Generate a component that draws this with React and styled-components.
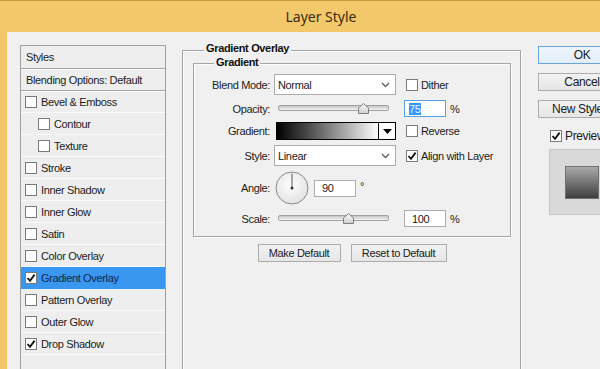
import React from 'react';
import styled, { createGlobalStyle } from 'styled-components';

const GlobalStyle = createGlobalStyle`
  html, body {
    margin: 0;
    padding: 0;
    background: #f2c86b;
  }
  body {
    font-family: "Liberation Sans", Arial, sans-serif;
    font-size: 11px;
    letter-spacing: -0.35px;
    color: #1b1b1b;
  }
`;

const Frame = styled.div`
  width: 600px;
  height: 369px;
  overflow: hidden;
`;

const Window = styled.div`
  width: 642px;
  height: 369px;
  box-sizing: border-box;
  display: flex;
  flex-direction: column;
  background: #f2c86b;
  border-top: 1px solid #c99a3f;
`;

const TitleBar = styled.div`
  height: 31px;
  flex: none;
  display: flex;
  align-items: center;
  justify-content: center;
  font-family: "Noto Sans", "Open Sans", sans-serif;
  font-size: 14px;
  letter-spacing: 0;
  color: #3b2c12;
`;

const Body = styled.div`
  flex: 1;
  margin: 0 7px;
  background: #f0f0f0;
  display: flex;
  align-items: flex-start;
  padding: 13px 0 0 13px;
  overflow: hidden;
`;

/* ---------- left list ---------- */

const StylesPanel = styled.div`
  flex: none;
  width: 146px;
  height: 340px;
  box-sizing: border-box;
  border: 1px solid #a0a0a0;
  background: #eeeeee;
`;

const HeaderRow = styled.div`
  height: ${p => p.h}px;
  display: flex;
  align-items: center;
  padding-left: 5px;
  border-bottom: 1px solid #a3a3a3;
  box-shadow: 0 1px 0 #fbfbfb;
`;

const StyleRow = styled.div`
  height: 21px;
  display: flex;
  align-items: center;
  gap: 4px;
  padding-left: ${p => (p.sub ? 17 : 4)}px;
  border-bottom: 1px solid ${p => (p.selected ? '#3a97ef' : '#fafafa')};
  background: ${p => (p.selected ? '#3a97ef' : 'transparent')};
  color: ${p => (p.selected ? '#0c2750' : 'inherit')};
`;

const Box = styled.span`
  flex: none;
  width: 12px;
  height: 12px;
  box-sizing: border-box;
  border: 1px solid #7a7a7a;
  background: #fff;
  display: inline-flex;
  align-items: center;
  justify-content: center;
`;

const Checkbox = ({ checked }) => (
  <Box>
    {checked && (
      <svg width="10" height="10" viewBox="0 0 10 10">
        <path d="M1.5 5 L4 7.8 L8.6 1.6" fill="none" stroke="#111" strokeWidth="1.8" />
      </svg>
    )}
  </Box>
);

/* ---------- middle groups ---------- */

const Middle = styled.div`
  flex: none;
  width: 339px;
  margin: 5px 0 0 16px;
`;

const Group = styled.div`
  position: relative;
  box-sizing: border-box;
  border: 1px solid #a6a6a6;
  box-shadow: inset 1px 1px 0 #fcfcfc, 1px 1px 0 #fcfcfc;
`;

const OuterGroup = styled(Group)`
  height: 340px;
  padding: 12px 9px 0 10px;
`;

const InnerGroup = styled(Group)`
  height: 174px;
  padding-top: 10px;
`;

const Legend = styled.span`
  position: absolute;
  top: ${p => p.top}px;
  left: ${p => p.left}px;
  padding: 0 2px;
  line-height: 13px;
  background: #f0f0f0;
  font-weight: bold;
  color: #111;
`;

const Form = styled.div`
  display: grid;
  grid-template-columns: 80px 122px 1fr;
  grid-template-rows: 21px 17px 18px 21px 34px 17px;
  row-gap: 5px;
  align-items: center;
`;

const Label = styled.div`
  text-align: right;
  padding-right: 4px;
`;

const Extra = styled.div`
  display: flex;
  align-items: center;
  gap: ${p => (p.check ? 3 : 4)}px;
  padding-left: ${p => (p.check ? 10 : 8)}px;
`;

const Select = styled.div`
  height: 21px;
  box-sizing: border-box;
  border: 1px solid #acacac;
  background: #fff;
  display: flex;
  align-items: center;
  justify-content: space-between;
  padding: 0 5px 0 3px;
`;

const Chevron = () => (
  <svg width="9" height="6" viewBox="0 0 9 6">
    <path d="M1 1 L4.5 4.5 L8 1" fill="none" stroke="#606060" strokeWidth="1.4" />
  </svg>
);

const SliderWrap = styled.div`
  position: relative;
  height: 17px;
  margin: 0 7px 0 4px;
`;

const Track = styled.div`
  position: absolute;
  left: 0;
  right: 0;
  top: 5px;
  height: 4px;
  border: 1px solid #a2a2a2;
  border-radius: 2px;
  background: linear-gradient(#c6c6c6, #f4f4f4);
`;

const ThumbSvg = styled.svg`
  position: absolute;
  top: 3px;
  margin-left: -5px;
`;

const Slider = ({ value }) => (
  <SliderWrap>
    <Track />
    <ThumbSvg width="11" height="11" viewBox="0 0 11 11" style={{ left: `${value}%` }}>
      <defs>
        <linearGradient id="thumbFill" x1="0" y1="0" x2="0" y2="1">
          <stop offset="0" stopColor="#fafafa" />
          <stop offset="1" stopColor="#cfcfcf" />
        </linearGradient>
      </defs>
      <path d="M5.5 0.5 L10.5 5 L10.5 10.5 L0.5 10.5 L0.5 5 Z" fill="url(#thumbFill)" stroke="#7d7d7d" />
    </ThumbSvg>
  </SliderWrap>
);

const NumInput = styled.div`
  width: 42px;
  height: 17px;
  box-sizing: border-box;
  border: 1px solid ${p => (p.focused ? '#5b9fe0' : '#abadb3')};
  background: #fff;
  display: flex;
  align-items: center;
  padding-left: ${p => p.pad || 4}px;
`;

const Highlight = styled.span`
  background: #3399ff;
  color: #e8f2ff;
`;

const GradientBar = styled.div`
  display: flex;
  height: 18px;
  margin-left: 2px;
  box-sizing: border-box;
  border: 1px solid #000;
`;

const GradientFill = styled.div`
  flex: 1;
  background: linear-gradient(to right, #000 0%, #555 35%, #fff 100%);
  border-right: 1px solid #000;
`;

const ArrowBox = styled.div`
  width: 16px;
  background: #fff;
  display: flex;
  align-items: center;
  justify-content: center;
`;

const AngleCell = styled.div`
  display: flex;
  align-items: center;
  height: 34px;
`;

const DialSvg = styled.svg`
  flex: none;
  margin-left: 1px;
`;

const Dial = () => (
  <DialSvg width="34" height="34" viewBox="0 0 34 34">
    <defs>
      <radialGradient id="dialFill" cx="0.45" cy="0.4" r="0.6">
        <stop offset="0" stopColor="#ffffff" />
        <stop offset="1" stopColor="#e2e2e2" />
      </radialGradient>
    </defs>
    <circle cx="17" cy="17" r="16" fill="url(#dialFill)" stroke="#8a8a8a" />
    <line x1="17" y1="17" x2="17" y2="2.5" stroke="#555" strokeWidth="1" />
    <circle cx="17" cy="17" r="1.5" fill="#333" />
  </DialSvg>
);

const Degree = styled.span`
  margin-left: 4px;
  margin-top: -4px;
`;

const ButtonRow = styled.div`
  display: flex;
  justify-content: center;
  gap: 10px;
  margin-top: 7px;
`;

const Button = styled.button`
  width: ${p => p.w}px;
  height: 18px;
  padding: 0;
  font: inherit;
  font-size: ${p => p.size || 11}px;
  letter-spacing: -0.35px;
  color: #1b1b1b;
  box-sizing: border-box;
  white-space: nowrap;
  border: 1px solid ${p => (p.primary ? '#6aa4dc' : '#acacac')};
  background: ${p =>
    p.primary ? 'linear-gradient(#eef5fc, #e1edf9)' : 'linear-gradient(#f2f2f2, #e6e6e6)'};
`;

/* ---------- right column ---------- */

const Side = styled.div`
  flex: none;
  width: 88px;
  margin: 1px 0 0 17px;
  display: flex;
  flex-direction: column;
  gap: 9px;
`;

const PreviewRow = styled.label`
  display: flex;
  align-items: center;
  gap: 3px;
  margin: 2px 0 0 12px;
  font-size: 12px;
`;

const PreviewBox = styled.div`
  width: 66px;
  height: 66px;
  margin: -3px 0 0 11px;
  box-sizing: border-box;
  border: 1px solid #c6c6c6;
  background: #d9d9d9;
  display: flex;
  align-items: center;
  justify-content: center;
`;

const PreviewSwatch = styled.div`
  width: 34px;
  height: 33px;
  box-sizing: border-box;
  border: 1px solid #707070;
  background: linear-gradient(#a9a9a9, #3f3f3f);
`;

const styleItems = [
  { label: 'Bevel & Emboss' },
  { label: 'Contour', sub: true },
  { label: 'Texture', sub: true },
  { label: 'Stroke' },
  { label: 'Inner Shadow' },
  { label: 'Inner Glow' },
  { label: 'Satin' },
  { label: 'Color Overlay' },
  { label: 'Gradient Overlay', checked: true, selected: true },
  { label: 'Pattern Overlay' },
  { label: 'Outer Glow' },
  { label: 'Drop Shadow', checked: true },
];

export default function App() {
  const opacity = 75;
  const scale = 100;
  return (
    <Frame>
      <GlobalStyle />
      <Window>
        <TitleBar>Layer Style</TitleBar>
        <Body>
          <StylesPanel>
            <HeaderRow h={22}>Styles</HeaderRow>
            <HeaderRow h={21}>Blending Options: Default</HeaderRow>
            {styleItems.map(item => (
              <StyleRow key={item.label} sub={item.sub} selected={item.selected}>
                <Checkbox checked={item.checked} />
                {item.label}
              </StyleRow>
            ))}
          </StylesPanel>

          <Middle>
            <OuterGroup>
              <Legend top={-9} left={21}>Gradient Overlay</Legend>
              <InnerGroup>
                <Legend top={-8} left={20}>Gradient</Legend>
                <Form>
                  <Label>Blend Mode:</Label>
                  <Select>
                    Normal
                    <Chevron />
                  </Select>
                  <Extra check>
                    <Checkbox />
                    Dither
                  </Extra>

                  <Label>Opacity:</Label>
                  <Slider value={(opacity / 100) * 100 + 2} />
                  <Extra>
                    <NumInput focused>
                      <Highlight>{opacity}</Highlight>
                    </NumInput>
                    %
                  </Extra>

                  <Label>Gradient:</Label>
                  <GradientBar>
                    <GradientFill />
                    <ArrowBox>
                      <svg width="9" height="5" viewBox="0 0 9 5">
                        <path d="M0 0 L9 0 L4.5 5 Z" fill="#000" />
                      </svg>
                    </ArrowBox>
                  </GradientBar>
                  <Extra check>
                    <Checkbox />
                    Reverse
                  </Extra>

                  <Label>Style:</Label>
                  <Select>
                    Linear
                    <Chevron />
                  </Select>
                  <Extra check>
                    <Checkbox checked />
                    Align with Layer
                  </Extra>

                  <Label>Angle:</Label>
                  <AngleCell>
                    <Dial />
                    <NumInput style={{ marginLeft: 5 }} pad={7}>90</NumInput>
                    <Degree>°</Degree>
                  </AngleCell>
                  <div />

                  <Label>Scale:</Label>
                  <Slider value={((scale - 10) / 140) * 100 - 1} />
                  <Extra>
                    <NumInput pad={7}>{scale}</NumInput>
                    %
                  </Extra>
                </Form>
              </InnerGroup>
              <ButtonRow>
                <Button w={83}>Make Default</Button>
                <Button w={96}>Reset to Default</Button>
              </ButtonRow>
            </OuterGroup>
          </Middle>

          <Side>
            <Button w={88} size={12} primary>OK</Button>
            <Button w={88} size={12}>Cancel</Button>
            <Button w={88} size={12}>New Style...</Button>
            <PreviewRow>
              <Checkbox checked />
              Preview
            </PreviewRow>
            <PreviewBox>
              <PreviewSwatch />
            </PreviewBox>
          </Side>
        </Body>
      </Window>
    </Frame>
  );
}
